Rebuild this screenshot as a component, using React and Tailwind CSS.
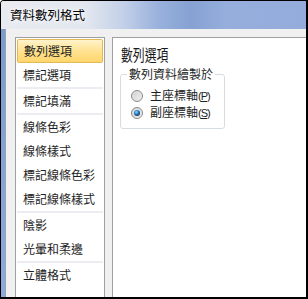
import React from 'react';

const items = [
  { label: '數列選項', selected: true },
  { label: '標記選項' },
  { sep: true },
  { label: '標記填滿' },
  { sep: true },
  { label: '線條色彩' },
  { label: '線條樣式' },
  { label: '標記線條色彩' },
  { label: '標記線條樣式' },
  { sep: true },
  { label: '陰影' },
  { label: '光暈和柔邊' },
  { sep: true },
  { label: '立體格式' },
];

const Radio = ({ checked }) => (
  <svg width="12" height="12" viewBox="0 0 12 12">
    <defs>
      <linearGradient id="ring" x1="0" y1="0" x2="1" y2="1">
        <stop offset="0" stopColor="#c9c9c9" />
        <stop offset="1" stopColor="#f8f8f8" />
      </linearGradient>
      <radialGradient id="dot" cx="0.4" cy="0.35" r="0.65">
        <stop offset="0" stopColor="#8fdcff" />
        <stop offset="0.55" stopColor="#2b7fc2" />
        <stop offset="1" stopColor="#0d3a66" />
      </radialGradient>
    </defs>
    <circle cx="6" cy="6" r="5.5" fill="url(#ring)" stroke="#8b8b8b" strokeWidth="1" />
    <circle cx="6" cy="6" r="4" fill="none" stroke="#e2e2e2" strokeWidth="1" />
    {checked && <circle cx="6" cy="6" r="3" fill="url(#dot)" />}
  </svg>
);

const RadioRow = ({ label, hotkey, checked }) => (
  <div className="flex items-center h-[17px] pl-[10px] gap-[7px]">
    <Radio checked={checked} />
    <span className="text-[12px] leading-[14px] text-[#1e1e1e]">
      {label}
      <span className="font-['Liberation_Sans',sans-serif] text-[11px] tracking-[-1px]">
        (<span className="underline">{hotkey}</span>)
      </span>
    </span>
  </div>
);

export default function App() {
  return (
    <div className="w-[308px] h-[299px] flex flex-col bg-white border-l border-t border-r-2 border-b-2 border-black rounded-tl-[4px] overflow-hidden font-['Noto_Sans_CJK_TC',sans-serif]">
      {/* Title bar */}
      <div className="h-[28px] shrink-0 flex items-center pl-[9px] bg-[linear-gradient(to_right,#e8ebf0_0%,#e2e7ef_28%,#c3d0e8_40%,#98b0dc_52%,#86a2d2_62%,#95aedc_74%,#93acdb_100%)]">
        <span className="text-[12.5px] leading-[14px] text-black [text-shadow:0_0_6px_#fff,0_0_3px_#fff]">資料數列格式</span>
      </div>

      <div className="flex flex-1 min-h-0">
        {/* left frame */}
        <div className="w-[4px] bg-[linear-gradient(to_bottom,#7d9ad0,#8eaadc)]" />

        {/* client area */}
        <div className="flex flex-1 bg-[#f0f0f0] border-l border-[#98a3b3] pt-[8px] pl-[9px] gap-[7px]">
          {/* list */}
          <div className="w-[90px] bg-white border-l border-t border-r border-[#a0a0a0] p-[1px] flex flex-col">
            {items.map((it, i) =>
              it.sep ? (
                <div key={i} className="h-[2px] bg-[#ececf3]" />
              ) : (
                <div
                  key={i}
                  className={`h-[24px] flex items-center pl-[6px] text-[12px] leading-[14px] text-[#1e1e1e] ${
                    it.selected
                      ? 'rounded-[2px] border border-[#e1b957] pl-[5px] bg-[linear-gradient(to_bottom,#fff3cb,#ffe291_50%,#ffd66c)]'
                      : ''
                  }`}
                >
                  {it.label}
                </div>
              )
            )}
          </div>

          {/* right panel */}
          <div className="flex-1 bg-white border-l border-t border-[#a0a0a0] pl-[7px]">
            <div className="h-[20px] mt-[6px] ml-[1px] leading-[20px] text-[16px] text-[#1a1a1a] origin-left scale-x-[0.74] whitespace-nowrap">
              數列選項
            </div>
            <fieldset className="mt-[3px] w-[105px] border border-[#d5dde3] rounded-[3px] pt-[6px] pb-[7px]">
              <legend className="ml-[6px] px-[2px] text-[12px] leading-[14px] text-[#1e1e1e]">數列資料繪製於</legend>
              <RadioRow label="主座標軸" hotkey="P" />
              <RadioRow label="副座標軸" hotkey="S" checked />
            </fieldset>
          </div>
        </div>
      </div>
    </div>
  );
}
